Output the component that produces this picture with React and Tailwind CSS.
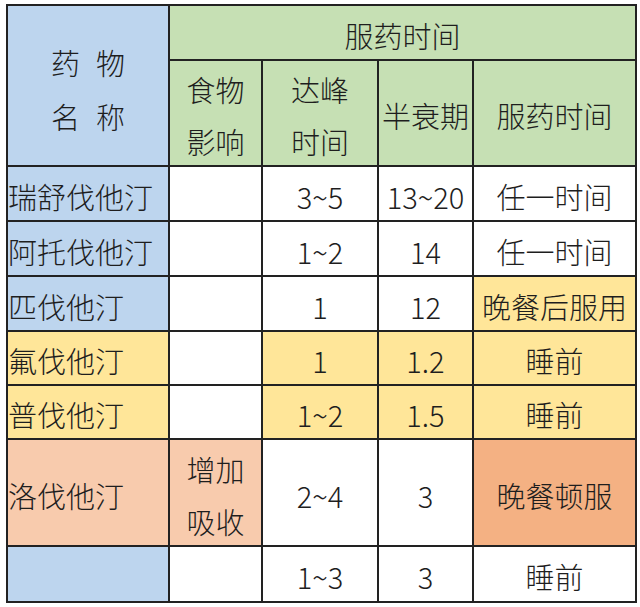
import React from "react";

const F = { fontFamily: '"Noto Sans CJK SC", "Noto Sans", sans-serif' };

const BLUE = "bg-[#bdd5ee]";
const GREEN = "bg-[#c6e0b4]";
const YEL = "bg-[#ffe699]";
const SAL = "bg-[#f8cbad]";
const ORG = "bg-[#f4b183]";
const WHITE = "bg-white";

function Cell({ bg, children, left, className = "" }) {
  return (
    <div
      className={`${bg} flex items-center pt-[4px] ${left ? "justify-start" : "justify-center text-center"} text-[29px] font-light leading-[52px] text-[#1e1e1e] ${className}`}
    >
      {children}
    </div>
  );
}

const rows = [
  { name: "瑞舒伐他汀", nb: BLUE, food: "", fb: WHITE, peak: "3~5", pb: WHITE, half: "13~20", hb: WHITE, time: "任一时间", tb: WHITE },
  { name: "阿托伐他汀", nb: BLUE, food: "", fb: WHITE, peak: "1~2", pb: WHITE, half: "14", hb: WHITE, time: "任一时间", tb: WHITE },
  { name: "匹伐他汀", nb: BLUE, food: "", fb: WHITE, peak: "1", pb: WHITE, half: "12", hb: WHITE, time: "晚餐后服用", tb: YEL },
  { name: "氟伐他汀", nb: YEL, food: "", fb: WHITE, peak: "1", pb: YEL, half: "1.2", hb: YEL, time: "睡前", tb: YEL },
  { name: "普伐他汀", nb: YEL, food: "", fb: WHITE, peak: "1~2", pb: YEL, half: "1.5", hb: YEL, time: "睡前", tb: YEL },
  { name: "洛伐他汀", nb: SAL, food: ["增加", "吸收"], fb: SAL, peak: "2~4", pb: WHITE, half: "3", hb: WHITE, time: "晚餐顿服", tb: ORG },
  { name: "", nb: BLUE, food: "", fb: WHITE, peak: "1~3", pb: WHITE, half: "3", hb: WHITE, time: "睡前", tb: WHITE },
];

export default function App() {
  return (
    <div className="w-[640px] h-[607px] bg-white overflow-hidden pt-[4px] pl-[6px]" style={F}>
      <div className="w-[631px] bg-[#222] p-[2px] grid gap-[2px] grid-cols-[160px_91px_114px_93px_161px] grid-rows-[53px_104px_53px_53px_53px_52px_52px_105px_54px]">
        <div className={`${BLUE} row-span-2 flex flex-col items-center justify-center pt-[6px] text-[29px] font-light leading-[54px] text-[#1e1e1e]`}>
          <div className="flex gap-[16px]"><span>药</span><span>物</span></div>
          <div className="flex gap-[16px]"><span>名</span><span>称</span></div>
        </div>
        <Cell bg={GREEN} className="col-span-4">服药时间</Cell>
        <Cell bg={GREEN}><div>食物<br />影响</div></Cell>
        <Cell bg={GREEN}><div>达峰<br />时间</div></Cell>
        <Cell bg={GREEN}>半衰期</Cell>
        <Cell bg={GREEN}>服药时间</Cell>
        {rows.map((r, i) => (
          <React.Fragment key={i}>
            <Cell bg={r.nb} left>{r.name}</Cell>
            <Cell bg={r.fb}>
              {Array.isArray(r.food) ? <div>{r.food[0]}<br />{r.food[1]}</div> : r.food}
            </Cell>
            <Cell bg={r.pb}>{r.peak}</Cell>
            <Cell bg={r.hb}>{r.half}</Cell>
            <Cell bg={r.tb}>{r.time}</Cell>
          </React.Fragment>
        ))}
      </div>
    </div>
  );
}
